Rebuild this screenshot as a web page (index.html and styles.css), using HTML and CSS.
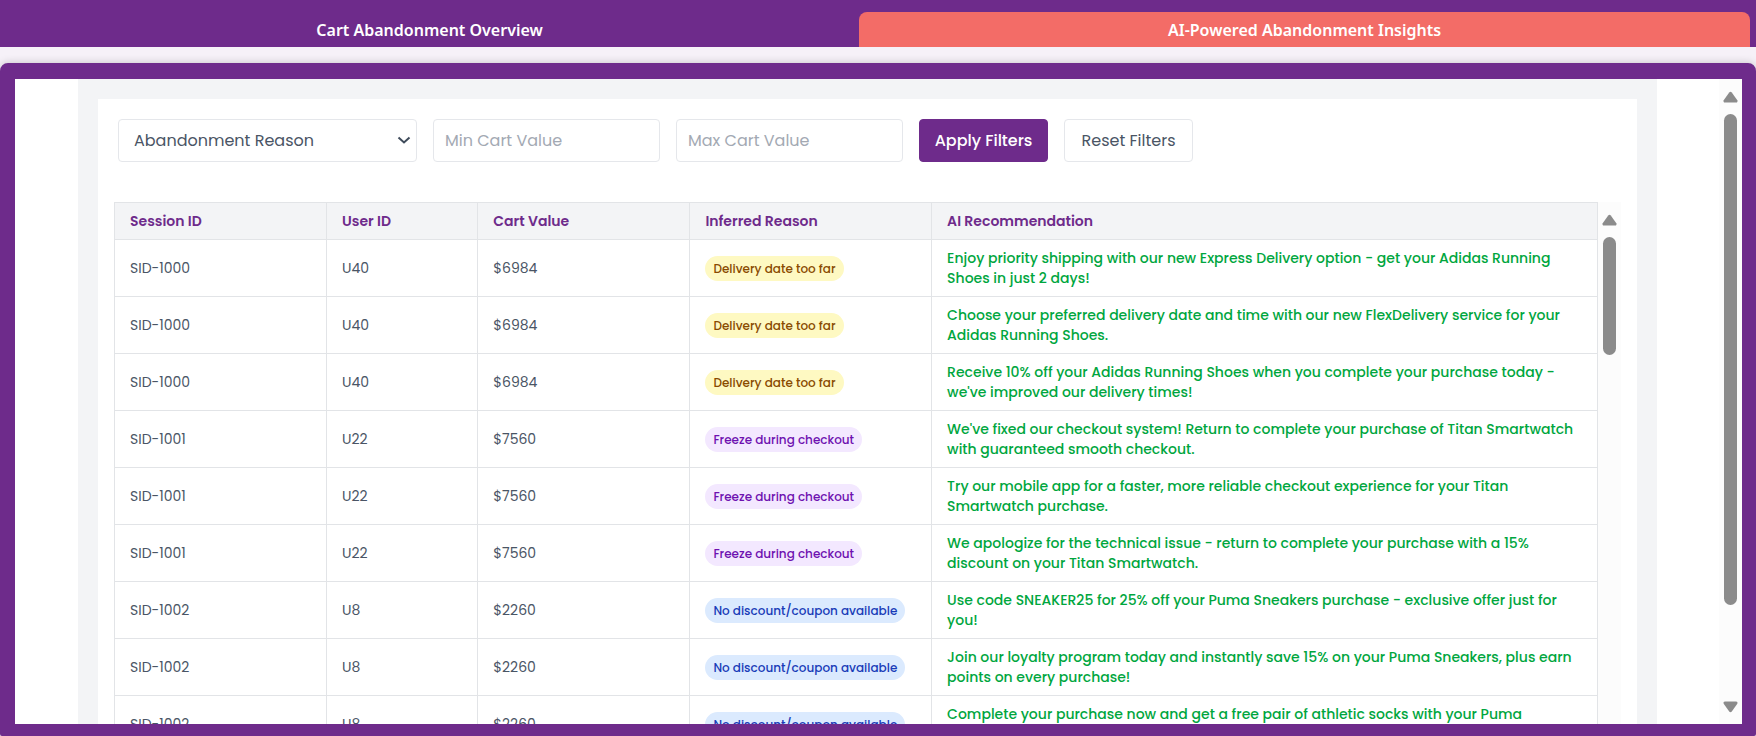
FILE: index.html
```html
<!DOCTYPE html>
<html lang="en">
<head>
<meta charset="utf-8">
<title>AI-Powered Abandonment Insights</title>
<link rel="stylesheet" href="styles.css">
</head>
<body>
<nav class="tabs">
  <button class="tab" type="button">Cart Abandonment Overview</button>
  <button class="tab tab-active" type="button">AI-Powered Abandonment Insights</button>
</nav>
<main class="panel">
  <div class="page">
    <section class="card">
      <form class="filters">
        <div class="select-wrap">
          <select class="field select" aria-label="Abandonment Reason"><option>Abandonment Reason</option></select>
          <svg class="chevron" viewBox="0 0 14 9" aria-hidden="true"><path d="M1.500 1.500 L7 6.500 L12.500 1.500"/></svg>
        </div>
        <input class="field input" type="text" placeholder="Min Cart Value" aria-label="Min Cart Value">
        <input class="field input" type="text" placeholder="Max Cart Value" aria-label="Max Cart Value">
        <button class="field button apply" type="button">Apply Filters</button>
        <button class="field button" type="button">Reset Filters</button>
      </form>
      <div class="table-area">
        <table class="sessions">
          <colgroup><col class="col-session"><col class="col-user"><col class="col-cart"><col class="col-reason"><col></colgroup>
          <thead>
            <tr><th>Session ID</th><th>User ID</th><th>Cart Value</th><th>Inferred Reason</th><th>AI Recommendation</th></tr>
          </thead>
          <tbody>
            <tr><td>SID-1000</td><td>U40</td><td>$6984</td><td><span class="badge delivery">Delivery date too far</span></td><td class="tip">Enjoy priority shipping with our new Express Delivery option - get your Adidas Running<br>Shoes in just 2 days!</td></tr>
            <tr><td>SID-1000</td><td>U40</td><td>$6984</td><td><span class="badge delivery">Delivery date too far</span></td><td class="tip">Choose your preferred delivery date and time with our new FlexDelivery service for your<br>Adidas Running Shoes.</td></tr>
            <tr><td>SID-1000</td><td>U40</td><td>$6984</td><td><span class="badge delivery">Delivery date too far</span></td><td class="tip">Receive 10% off your Adidas Running Shoes when you complete your purchase today -<br>we've improved our delivery times!</td></tr>
            <tr><td>SID-1001</td><td>U22</td><td>$7560</td><td><span class="badge freeze">Freeze during checkout</span></td><td class="tip">We've fixed our checkout system! Return to complete your purchase of Titan Smartwatch<br>with guaranteed smooth checkout.</td></tr>
            <tr><td>SID-1001</td><td>U22</td><td>$7560</td><td><span class="badge freeze">Freeze during checkout</span></td><td class="tip">Try our mobile app for a faster, more reliable checkout experience for your Titan<br>Smartwatch purchase.</td></tr>
            <tr><td>SID-1001</td><td>U22</td><td>$7560</td><td><span class="badge freeze">Freeze during checkout</span></td><td class="tip">We apologize for the technical issue - return to complete your purchase with a 15%<br>discount on your Titan Smartwatch.</td></tr>
            <tr><td>SID-1002</td><td>U8</td><td>$2260</td><td><span class="badge discount">No discount/coupon available</span></td><td class="tip">Use code SNEAKER25 for 25% off your Puma Sneakers purchase - exclusive offer just for<br>you!</td></tr>
            <tr><td>SID-1002</td><td>U8</td><td>$2260</td><td><span class="badge discount">No discount/coupon available</span></td><td class="tip">Join our loyalty program today and instantly save 15% on your Puma Sneakers, plus earn<br>points on every purchase!</td></tr>
            <tr><td>SID-1002</td><td>U8</td><td>$2260</td><td><span class="badge discount">No discount/coupon available</span></td><td class="tip">Complete your purchase now and get a free pair of athletic socks with your Puma<br>Sneakers.</td></tr>
          </tbody>
        </table>
        <div class="scrollbar" aria-hidden="true">
          <svg class="arrow" viewBox="0 0 15 12"><path d="M6.200 1.400 Q7.500 0 8.800 1.400 L14.300 9.200 Q15 11.500 13 11.500 H2 Q0 11.500 .7 9.200 Z"/></svg>
          <div class="thumb thumb-short"></div>
        </div>
      </div>
    </section>
  </div>
  <div class="scrollbar" aria-hidden="true">
    <svg class="arrow" viewBox="0 0 15 12"><path d="M6.200 1.400 Q7.500 0 8.800 1.400 L14.300 9.200 Q15 11.500 13 11.500 H2 Q0 11.500 .7 9.200 Z"/></svg>
    <div class="thumb"></div>
    <svg class="arrow arrow-down" viewBox="0 0 15 12"><path d="M6.200 1.400 Q7.500 0 8.800 1.400 L14.300 9.200 Q15 11.500 13 11.500 H2 Q0 11.500 .7 9.200 Z"/></svg>
  </div>
</main>
</body>
</html>
```

FILE: styles.css
```css
* {
  box-sizing: border-box;
}

body {
  display: flex;
  flex-direction: column;
  gap: 16px;
  height: 100vh;
  margin: 0;
  overflow: hidden;
  background: #f6f1f8;
  color: #4a5565;
  font-family: Poppins, Inter, sans-serif;
}

.tabs {
  display: flex;
  flex: none;
  padding: 12px 6px 0 0;
  background: #6e2b8b;
}

.tab {
  flex: 1 1 0;
  height: 35px;
  padding: 0;
  border: 0;
  border-radius: 8px 8px 0 0;
  background: none;
  color: #fff;
  font: 600 16px/24px "Noto Sans", sans-serif;
}

.tab:first-child {
  flex-grow: 27;
}

.tab-active {
  flex-grow: 28;
  background: #f36c67;
}

.panel {
  display: flex;
  flex: 1;
  min-height: 0;
  border: solid #6e2b8b;
  border-width: 16px 14px 12px 15px;
  background: #6e2b8b;
  border-radius: 8px 8px 2px 2px;
  box-shadow: 0 0 8px rgba(0, 0, 0, 0.2);
}

.page {
  flex: 1;
  min-width: 0;
  overflow: hidden;
  padding: 0 62px 0 63px;
  background: #fff;
}

.card {
  border: solid #f3f4f6;
  border-width: 20px 20px 0;
  padding: 20px 16px;
  background: #fff;
}

.filters {
  display: flex;
  gap: 16px;
  margin: 0 4px 40px;
}

.field {
  height: 43px;
  border: 1px solid #e5e7eb;
  border-radius: 4px;
  background: #fff;
  color: #4a5565;
  font: 400 16px/24px Poppins, Inter, sans-serif;
}

.select-wrap {
  position: relative;
  width: 299px;
}

.select {
  width: 100%;
  padding: 0 15px;
  appearance: none;
}

.chevron {
  position: absolute;
  top: 17px;
  right: 6px;
  width: 14px;
  height: 9px;
  fill: none;
  stroke: #3f4b5b;
  stroke-width: 2;
}

.input {
  width: 227px;
  padding: 0 11px;
}

.input::placeholder {
  color: #a3a9b3;
  opacity: 1;
}

.button {
  width: 129px;
  padding: 0;
}

.apply {
  border-color: #6e2b8b;
  background: #6e2b8b;
  color: #fff;
  font-weight: 500;
}

.table-area {
  display: flex;
}

.sessions {
  flex: 1;
  min-width: 0;
  table-layout: fixed;
  border-collapse: collapse;
  font-size: 14px;
  line-height: 20px;
}

.col-session,
.col-cart {
  width: 14.3%;
}

.col-user {
  width: 10.2%;
}

.col-reason {
  width: 16.3%;
}

.sessions th,
.sessions td {
  padding: 8px 15px;
  border: 1px solid #e2e4e7;
  text-align: left;
  white-space: nowrap;
}

.sessions th {
  background: #f3f4f6;
  color: #6e2b8b;
  font-weight: 600;
}

.sessions .tip {
  color: #00a63e;
  font-weight: 500;
}

.badge {
  display: inline-block;
  padding: 4px 8px;
  border-radius: 13px;
  font-size: 12px;
  font-weight: 500;
  line-height: 17px;
  vertical-align: middle;
}

.delivery {
  background: #fef9c2;
  color: #894b00;
}

.freeze {
  background: #f3e8ff;
  color: #6e11b0;
}

.discount {
  background: #dbeafe;
  color: #193cb8;
}

.scrollbar {
  display: flex;
  flex: none;
  flex-direction: column;
  align-items: center;
  width: 23px;
  padding: 12px 0 11px;
  background: #fcfcfc;
}

.arrow {
  flex: none;
  width: 15px;
  height: 12px;
  fill: #8b8b8b;
}

.arrow-down {
  margin-top: auto;
  transform: rotate(180deg);
}

.thumb {
  width: 13px;
  height: 79%;
  flex: none;
  margin-top: 11px;
  border-radius: 7px;
  background: #8b8b8b;
}

.thumb-short {
  height: 118px;
}
```
